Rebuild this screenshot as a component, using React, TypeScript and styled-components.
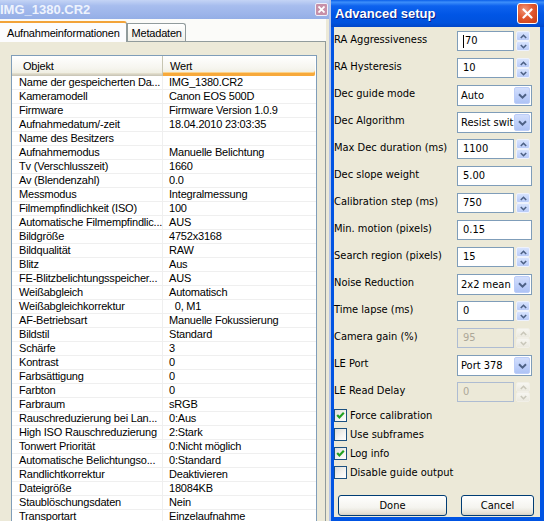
import styled, { createGlobalStyle } from "styled-components";

const GlobalStyle = createGlobalStyle`
  html, body {
    margin: 0;
    padding: 0;
  }
  body {
    width: 544px;
    height: 521px;
    overflow: hidden;
    background: #ece9d8;
  }
`;

const infoRows: [string, string][] = [
  ["Name der gespeicherten Da...", "IMG_1380.CR2"],
  ["Kameramodell", "Canon EOS 500D"],
  ["Firmware", "Firmware Version 1.0.9"],
  ["Aufnahmedatum/-zeit", "18.04.2010 23:03:35"],
  ["Name des Besitzers", ""],
  ["Aufnahmemodus", "Manuelle Belichtung"],
  ["Tv (Verschlusszeit)", "1660"],
  ["Av (Blendenzahl)", "0.0"],
  ["Messmodus", "Integralmessung"],
  ["Filmempfindlichkeit (ISO)", "100"],
  ["Automatische Filmempfindlic...", "AUS"],
  ["Bildgröße", "4752x3168"],
  ["Bildqualität", "RAW"],
  ["Blitz", "Aus"],
  ["FE-Blitzbelichtungsspeicher...", "AUS"],
  ["Weißabgleich", "Automatisch"],
  ["Weißabgleichkorrektur", "  0, M1"],
  ["AF-Betriebsart", "Manuelle Fokussierung"],
  ["Bildstil", "Standard"],
  ["Schärfe", "3"],
  ["Kontrast", "0"],
  ["Farbsättigung", "0"],
  ["Farbton", "0"],
  ["Farbraum", "sRGB"],
  ["Rauschreduzierung bei Lan...", "0:Aus"],
  ["High ISO Rauschreduzierung", "2:Stark"],
  ["Tonwert Priorität", "0:Nicht möglich"],
  ["Automatische Belichtungso...", "0:Standard"],
  ["Randlichtkorrektur", "Deaktivieren"],
  ["Dateigröße", "18084KB"],
  ["Staublöschungsdaten", "Nein"],
  ["Transportart", "Einzelaufnahme"],
];

type Setting = {
  label: string;
  kind: "spin" | "text" | "combo";
  value: string;
  disabled?: boolean;
  caret?: boolean;
};

const settings: Setting[] = [
  { label: "RA Aggressiveness", kind: "spin", value: "70", caret: true },
  { label: "RA Hysteresis", kind: "spin", value: "10" },
  { label: "Dec guide mode", kind: "combo", value: "Auto" },
  { label: "Dec Algorithm", kind: "combo", value: "Resist swit" },
  { label: "Max Dec duration (ms)", kind: "spin", value: "1100" },
  { label: "Dec slope weight", kind: "text", value: "5.00" },
  { label: "Calibration step (ms)", kind: "spin", value: "750" },
  { label: "Min. motion (pixels)", kind: "text", value: "0.15" },
  { label: "Search region (pixels)", kind: "spin", value: "15" },
  { label: "Noise Reduction", kind: "combo", value: "2x2 mean" },
  { label: "Time lapse (ms)", kind: "spin", value: "0" },
  { label: "Camera gain (%)", kind: "spin", value: "95", disabled: true },
  { label: "LE Port", kind: "combo", value: "Port 378" },
  { label: "LE Read Delay", kind: "spin", value: "0", disabled: true },
];

const options = [
  { label: "Force calibration", checked: true },
  { label: "Use subframes", checked: false },
  { label: "Log info", checked: true },
  { label: "Disable guide output", checked: false },
];

function Chevron({ up, disabled }: { up?: boolean; disabled?: boolean }) {
  return (
    <svg width="7" height="5" viewBox="0 0 7 5">
      <polyline
        points={up ? "0.8,4 3.5,1.3 6.2,4" : "0.8,1 3.5,3.7 6.2,1"}
        fill="none"
        stroke={disabled ? "#c9c7ba" : "#4d6185"}
        strokeWidth="1.6"
      />
    </svg>
  );
}

function Spinner({ disabled }: { disabled?: boolean }) {
  return (
    <SpinWrap>
      <SpinButton $disabled={disabled}>
        <Chevron up disabled={disabled} />
      </SpinButton>
      <SpinButton $disabled={disabled}>
        <Chevron disabled={disabled} />
      </SpinButton>
    </SpinWrap>
  );
}

function SettingControl({ item }: { item: Setting }) {
  if (item.kind === "combo") {
    return (
      <Combo>
        <ComboText>{item.value}</ComboText>
        <ComboButton>
          <svg width="9" height="6" viewBox="0 0 9 6">
            <polyline points="1,1.2 4.5,4.6 8,1.2" fill="none" stroke="#4d6185" strokeWidth="2" />
          </svg>
        </ComboButton>
      </Combo>
    );
  }
  if (item.kind === "text") {
    return <TextBox $wide>{item.value}</TextBox>;
  }
  return (
    <SpinGroup>
      <TextBox $disabled={item.disabled}>
        {item.caret && <Caret />}
        {item.value}
      </TextBox>
      <Spinner disabled={item.disabled} />
    </SpinGroup>
  );
}

export default function App() {
  return (
    <>
      <GlobalStyle />
      <Screen>
        <InfoWindow>
          <InactiveTitle>
            <InactiveCaption>IMG_1380.CR2</InactiveCaption>
            <InactiveClose>
              <svg width="7" height="7" viewBox="0 0 7 7">
                <path d="M0.5 0.5 L6.5 6.5 M6.5 0.5 L0.5 6.5" stroke="#fff" strokeWidth="1.8" />
              </svg>
            </InactiveClose>
          </InactiveTitle>
          <InfoBody>
            <TabStrip>
              <Tab $active>Aufnahmeinformationen</Tab>
              <Tab>Metadaten</Tab>
            </TabStrip>
            <TabPage>
              <ListView>
                <ListHeader>
                  <HeaderCell $first>Objekt</HeaderCell>
                  <HeaderCell $hot>Wert</HeaderCell>
                </ListHeader>
                {infoRows.map(([name, value]) => (
                  <ListRow key={name}>
                    <Cell $first>{name}</Cell>
                    <Cell>{value}</Cell>
                  </ListRow>
                ))}
              </ListView>
            </TabPage>
          </InfoBody>
        </InfoWindow>

        <SetupWindow>
          <ActiveTitle>
            <ActiveCaption>Advanced setup</ActiveCaption>
            <CloseButton>
              <svg width="11" height="11" viewBox="0 0 11 11">
                <path d="M1.5 1.5 L9.5 9.5 M9.5 1.5 L1.5 9.5" stroke="#fff" strokeWidth="2.2" strokeLinecap="round" />
              </svg>
            </CloseButton>
          </ActiveTitle>
          <SetupBody>
            {settings.map((item) => (
              <FormRow key={item.label}>
                <FormLabel>{item.label}</FormLabel>
                <SettingControl item={item} />
              </FormRow>
            ))}
            {options.map((opt) => (
              <CheckRow key={opt.label}>
                <CheckBox>
                  {opt.checked && (
                    <svg width="11" height="11" viewBox="0 0 11 11">
                      <polyline points="2.2,5 4.4,7.4 8.8,2.8" fill="none" stroke="#21a121" strokeWidth="2.2" />
                    </svg>
                  )}
                </CheckBox>
                <span>{opt.label}</span>
              </CheckRow>
            ))}
            <ButtonRow>
              <PushButton $width={109}>Done</PushButton>
              <PushButton $width={73}>Cancel</PushButton>
            </ButtonRow>
          </SetupBody>
        </SetupWindow>
      </Screen>
    </>
  );
}

const Screen = styled.div`
  display: flex;
  width: 544px;
  height: 521px;
  overflow: hidden;
`;

/* ---------- left window (inactive) ---------- */

const InfoWindow = styled.div`
  width: 331px;
  flex: none;
  display: flex;
  flex-direction: column;
  box-sizing: border-box;
  border-right: 2px solid #b4c4e8;
  background: #ece9d8;
  font-family: "Liberation Sans", Arial, sans-serif;
  font-size: 11px;
  letter-spacing: -0.2px;
  color: #000;
`;

const InactiveTitle = styled.div`
  height: 19px;
  flex: none;
  display: flex;
  align-items: center;
  justify-content: space-between;
  padding-right: 1px;
  background: linear-gradient(180deg, #c4d4f5 0%, #a7bdee 30%, #9db5ea 70%, #94aee6 100%);
`;

const InactiveCaption = styled.span`
  font-weight: bold;
  font-size: 13px;
  letter-spacing: 0;
  color: #eef3fd;
`;

const InactiveClose = styled.div`
  width: 13px;
  height: 13px;
  box-sizing: border-box;
  border: 1px solid #eef0fa;
  border-radius: 2px;
  background: #c790a8;
  display: flex;
  align-items: center;
  justify-content: center;
`;

const InfoBody = styled.div`
  flex: 1;
  display: flex;
  flex-direction: column;
  padding-right: 3px;
  min-height: 0;
`;

const TabStrip = styled.div`
  height: 22px;
  flex: none;
  display: flex;
  align-items: flex-end;
  background: #fbfbf9;
  border-bottom: 1px solid #919b9c;
`;

const Tab = styled.div<{ $active?: boolean }>`
  box-sizing: border-box;
  height: ${(p) => (p.$active ? "21px" : "18px")};
  margin-bottom: ${(p) => (p.$active ? "-1px" : "0")};
  padding: ${(p) => (p.$active ? "3px 6px 0 7px" : "2px 3px 0 4px")};
  border: 1px solid #919b9c;
  border-left: ${(p) => (p.$active ? "none" : "1px solid #919b9c")};
  border-bottom: none;
  border-top: ${(p) => (p.$active ? "2px solid #f2a33a" : "1px solid #919b9c")};
  border-radius: 0 3px 0 0;
  background: ${(p) => (p.$active ? "#fcfcfe" : "linear-gradient(180deg, #ffffff, #f0efe8)")};
  white-space: nowrap;
  line-height: 14px;
`;

const TabPage = styled.div`
  flex: 1;
  min-height: 0;
  padding: 13px 8px 0 11px;
  border-right: 1px solid #919b9c;
  overflow: hidden;
`;

const ListView = styled.div`
  width: 306px;
  box-sizing: border-box;
  border: 1px solid #7f9db9;
  background: #fff;
  height: 480px;
`;

const ListHeader = styled.div`
  display: grid;
  grid-template-columns: 151px 1fr;
  height: 20px;
`;

const HeaderCell = styled.div<{ $first?: boolean; $hot?: boolean }>`
  box-sizing: border-box;
  height: 20px;
  padding: 3px 0 0 ${(p) => (p.$first ? "11px" : "7px")};
  line-height: 14px;
  background: linear-gradient(180deg, #ffffff 0%, #f6f5ef 60%, #ebeadb 100%);
  box-shadow: ${(p) =>
    p.$hot
      ? "inset 0 -3px 0 #f7a93b, inset 0 -4px 0 #fbd28a"
      : "inset 0 -1px 0 #cbc7b8, inset 0 -2px 0 #d6d2c2, inset 0 -3px 0 #e2decd"};
  border-right: ${(p) => (p.$first ? "1px solid #c7c5b2" : "none")};
  border-radius: ${(p) => (p.$hot ? "0 0 2px 0" : "0")};
  margin-right: ${(p) => (p.$hot ? "1px" : "0")};
`;

const ListRow = styled.div`
  display: grid;
  grid-template-columns: 151px 1fr;
  height: 14px;
  box-sizing: border-box;
  border-bottom: 1px solid #efefef;
`;

const Cell = styled.div<{ $first?: boolean }>`
  padding-left: ${(p) => (p.$first ? "7px" : "6px")};
  line-height: 13px;
  white-space: pre;
  overflow: hidden;
  border-right: ${(p) => (p.$first ? "1px solid #efefef" : "none")};
`;

/* ---------- right window (active dialog) ---------- */

const SetupWindow = styled.div`
  width: 213px;
  flex: none;
  display: flex;
  flex-direction: column;
  background: #0054e3;
  font-family: "DejaVu Sans Condensed", "DejaVu Sans", sans-serif;
  font-weight: 400;
  font-size: 11px;
  color: #000;
`;

const ActiveTitle = styled.div`
  height: 27px;
  flex: none;
  display: flex;
  align-items: center;
  justify-content: space-between;
  padding: 0 6px 0 4px;
  background: linear-gradient(
    180deg,
    #0a5ee8 0%,
    #3d8ffb 8%,
    #0d62ee 22%,
    #0055e5 55%,
    #0052dd 85%,
    #0046c8 100%
  );
`;

const ActiveCaption = styled.span`
  font-family: "Liberation Sans", Arial, sans-serif;
  font-weight: bold;
  font-size: 13px;
  color: #fff;
  text-shadow: 1px 1px 0 #0a1e8a;
`;

const CloseButton = styled.div`
  width: 21px;
  height: 21px;
  box-sizing: border-box;
  border: 1px solid #fff;
  border-radius: 3px;
  background: radial-gradient(circle at 35% 30%, #f0987a 0%, #e2582f 45%, #c63c13 100%);
  display: flex;
  align-items: center;
  justify-content: center;
`;

const SetupBody = styled.div`
  flex: 1;
  margin: 0 4px 4px 3px;
  padding-top: 4px;
  background: #ece9d8;
  display: flex;
  flex-direction: column;
`;

const FormRow = styled.div`
  display: grid;
  grid-template-columns: 123px auto;
  height: 27px;
  align-items: start;
`;

const FormLabel = styled.div`
  padding-top: 2px;
  line-height: 13px;
  white-space: nowrap;
`;

const SpinGroup = styled.div`
  display: flex;
  gap: 2px;
`;

const TextBox = styled.div<{ $wide?: boolean; $disabled?: boolean }>`
  width: ${(p) => (p.$wide ? "75px" : "57px")};
  height: 20px;
  box-sizing: border-box;
  border: 1px solid ${(p) => (p.$disabled ? "#aebcd2" : "#7f9db9")};
  background: ${(p) => (p.$disabled ? "#ece9d8" : "#fff")};
  color: ${(p) => (p.$disabled ? "#aca899" : "#000")};
  padding-left: 5px;
  line-height: 18px;
  display: flex;
  align-items: center;
`;

const Caret = styled.span`
  display: inline-block;
  width: 1px;
  height: 13px;
  background: #000;
  margin-right: 1px;
`;

const SpinWrap = styled.div`
  width: 14px;
  height: 20px;
  display: flex;
  flex-direction: column;
`;

const SpinButton = styled.div<{ $disabled?: boolean }>`
  flex: 1;
  box-sizing: border-box;
  border: 1px solid ${(p) => (p.$disabled ? "#f1efe7" : "#eef2fd")};
  border-radius: 2px;
  background: ${(p) =>
    p.$disabled
      ? "linear-gradient(180deg, #f7f6f1, #ebe9df)"
      : "linear-gradient(180deg, #d7e3fd, #b9cbf8)"};
  display: flex;
  align-items: center;
  justify-content: center;
`;

const Combo = styled.div`
  width: 75px;
  height: 21px;
  box-sizing: border-box;
  border: 1px solid #7f9db9;
  background: #fff;
  display: flex;
  align-items: stretch;
  padding: 1px;
`;

const ComboText = styled.div`
  flex: 1;
  padding-left: 2px;
  line-height: 17px;
  white-space: nowrap;
  overflow: hidden;
`;

const ComboButton = styled.div`
  width: 16px;
  flex: none;
  box-sizing: border-box;
  border: 1px solid #bccdf8;
  border-radius: 2px;
  background: linear-gradient(180deg, #d2defc 0%, #bccef9 60%, #aec3f5 100%);
  display: flex;
  align-items: center;
  justify-content: center;
`;

const CheckRow = styled.label`
  height: 19px;
  display: flex;
  align-items: flex-start;
  gap: 3px;
  line-height: 13px;
`;

const CheckBox = styled.span`
  width: 13px;
  height: 13px;
  flex: none;
  box-sizing: border-box;
  border: 1px solid #1c5180;
  background: linear-gradient(135deg, #dcdcd7 0%, #f4f4f1 60%, #ffffff 100%);
  display: flex;
  align-items: center;
  justify-content: center;
`;

const ButtonRow = styled.div`
  display: flex;
  gap: 14px;
  margin-top: 10px;
  padding-left: 4px;
`;

const PushButton = styled.div<{ $width: number }>`
  width: ${(p) => p.$width}px;
  height: 21px;
  box-sizing: border-box;
  border: 1px solid #003c74;
  border-radius: 3px;
  background: linear-gradient(180deg, #ffffff 0%, #f5f4ef 60%, #e4e1d6 90%, #d6d0c5 100%);
  display: flex;
  align-items: center;
  justify-content: center;
`;
